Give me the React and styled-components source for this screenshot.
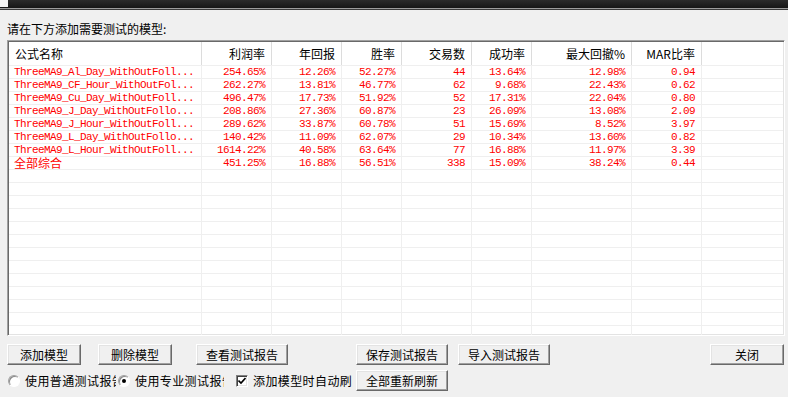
import React from "react";
import styled, { createGlobalStyle } from "styled-components";

const GlobalStyle = createGlobalStyle`
  html, body {
    margin: 0;
    padding: 0;
    background: #f0f0f0;
  }
  body {
    font-family: "Noto Sans CJK SC", "Liberation Sans", sans-serif;
    font-size: 12px;
    color: #000;
  }
`;

const Window = styled.div`
  width: 788px;
  height: 397px;
  overflow: hidden;
  display: flex;
  flex-direction: column;
  background: #f0f0f0;
`;

const TitleBar = styled.div`
  height: 10px;
  flex-shrink: 0;
  display: flex;
  align-items: flex-start;
  background: linear-gradient(
    to bottom,
    #2b2b2b 0,
    #161616 8px,
    #9c9c9c 8px,
    #9c9c9c 9px,
    #3a3a3a 9px
  );
`;

const WinIcon = styled.div`
  width: 8px;
  height: 7px;
  background: #f4f4f4;
`;

const Body = styled.div`
  padding: 0 3px 0 7px;
  display: flex;
  flex-direction: column;
`;

const Prompt = styled.div`
  height: 30px;
  box-sizing: border-box;
  padding-top: 11px;
  line-height: 16px;
  font-size: 12px;
  white-space: nowrap;
`;

const ListBox = styled.div`
  height: 296px;
  box-sizing: border-box;
  border-top: 1px solid #a0a0a0;
  border-left: 1px solid #a0a0a0;
  border-bottom: 1px solid #ffffff;
  border-right: 1px solid #ffffff;
  box-shadow: inset 1px 1px 0 #696969, inset -1px -1px 0 #e3e3e3;
  padding: 1px;
  background: #fff;
  overflow: hidden;
  display: flex;
  flex-direction: column;
`;

const cols = "193px 70px 70px 60px 70px 60px 100px 70px 1fr";

const HeaderRow = styled.div`
  display: grid;
  grid-template-columns: ${cols};
  height: 23px;
  flex-shrink: 0;
  background: #fff;
`;

const HeadCell = styled.div`
  border-right: ${(p) => (p.$last ? "none" : "1px solid #dcdcdc")};
  padding: ${(p) => (p.$left ? "0 0 0 6px" : "0 6px 0 0")};
  text-align: ${(p) => (p.$left ? "left" : "right")};
  line-height: 23px;
  font-size: 12px;
  white-space: nowrap;
  overflow: hidden;
`;

const Row = styled.div`
  display: grid;
  grid-template-columns: ${cols};
  height: 13px;
  flex-shrink: 0;
  box-sizing: border-box;
  border-top: 1px solid #efefef;
`;

const Cell = styled.div`
  border-right: ${(p) => (p.$last ? "none" : "1px solid #efefef")};
  padding: ${(p) => (p.$left ? "0 0 0 5px" : "0 6px 0 0")};
  text-align: ${(p) => (p.$left ? "left" : "right")};
  color: #ff0000;
  font-family: ${(p) =>
    p.$cjk
      ? '"Noto Sans CJK SC", sans-serif'
      : '"Liberation Mono", "DejaVu Sans Mono", monospace'};
  font-size: ${(p) => (p.$cjk ? "12px" : "11px")};
  letter-spacing: ${(p) => (p.$cjk ? "0" : "-0.6px")};
  line-height: 12px;
  white-space: nowrap;
  overflow: hidden;
`;

const ButtonRow = styled.div`
  display: flex;
  align-items: center;
  height: 21px;
  margin-top: ${(p) => p.$mt}px;
`;

const Button = styled.div`
  width: ${(p) => p.$w}px;
  height: 21px;
  margin-left: ${(p) => p.$ml || 0}px;
  flex-shrink: 0;
  box-sizing: border-box;
  border-top: 1px solid #ffffff;
  border-left: 1px solid #ffffff;
  border-bottom: 1px solid #696969;
  border-right: 1px solid #696969;
  box-shadow: inset -1px -1px 0 #a0a0a0, inset 1px 1px 0 #e3e3e3;
  background: #f0f0f0;
  display: flex;
  align-items: center;
  justify-content: center;
  font-size: 12px;
  white-space: nowrap;
`;

const Option = styled.div`
  width: ${(p) => p.$w}px;
  margin-left: ${(p) => p.$ml || 0}px;
  flex-shrink: 0;
  display: flex;
  align-items: center;
  overflow: hidden;
  white-space: nowrap;
  font-size: 12px;
  letter-spacing: 0.4px;
`;

const RadioMark = styled.span`
  width: 12px;
  height: 12px;
  flex-shrink: 0;
  margin-right: 5px;
  box-sizing: border-box;
  border-radius: 50%;
  border: 1px solid;
  border-color: #a0a0a0 #ffffff #ffffff #a0a0a0;
  box-shadow: inset 1px 1px 0 #8a8a8a;
  background: #fff;
  display: flex;
  align-items: center;
  justify-content: center;

  &::after {
    content: "";
    width: 4px;
    height: 4px;
    border-radius: 50%;
    background: ${(p) => (p.$checked ? "#000" : "transparent")};
  }
`;

const CheckMark = styled.span`
  width: 12px;
  height: 12px;
  flex-shrink: 0;
  margin-right: 5px;
  box-sizing: border-box;
  border: 1px solid;
  border-color: #808080 #ffffff #ffffff #808080;
  box-shadow: inset 1px 1px 0 #404040, inset -1px -1px 0 #e3e3e3;
  background: #fff;
  display: flex;
  align-items: center;
  justify-content: center;
`;

const rows = [
  ["ThreeMA9_Al_Day_WithOutFoll...", "254.65%", "12.26%", "52.27%", "44", "13.64%", "12.98%", "0.94"],
  ["ThreeMA9_CF_Hour_WithOutFol...", "262.27%", "13.81%", "46.77%", "62", "9.68%", "22.43%", "0.62"],
  ["ThreeMA9_Cu_Day_WithOutFoll...", "496.47%", "17.73%", "51.92%", "52", "17.31%", "22.04%", "0.80"],
  ["ThreeMA9_J_Day_WithOutFollo...", "208.86%", "27.36%", "60.87%", "23", "26.09%", "13.08%", "2.09"],
  ["ThreeMA9_J_Hour_WithOutFoll...", "289.62%", "33.87%", "60.78%", "51", "15.69%", "8.52%", "3.97"],
  ["ThreeMA9_L_Day_WithOutFollo...", "140.42%", "11.09%", "62.07%", "29", "10.34%", "13.60%", "0.82"],
  ["ThreeMA9_L_Hour_WithOutFoll...", "1614.22%", "40.58%", "63.64%", "77", "16.88%", "11.97%", "3.39"],
  ["全部综合", "451.25%", "16.88%", "56.51%", "338", "15.09%", "38.24%", "0.44"],
];

const headers = ["公式名称", "利润率", "年回报", "胜率", "交易数", "成功率", "最大回撤%", "MAR比率"];

const TOTAL_ROWS = 21;

export default function App() {
  const filler = Array.from({ length: TOTAL_ROWS - rows.length });

  return (
    <>
      <GlobalStyle />
      <Window>
        <TitleBar>
          <WinIcon />
        </TitleBar>
        <Body>
          <Prompt>请在下方添加需要测试的模型:</Prompt>
          <ListBox>
            <HeaderRow>
              {headers.map((h, i) => (
                <HeadCell key={h} $left={i === 0}>{h}</HeadCell>
              ))}
              <HeadCell $last />
            </HeaderRow>
            {rows.map((r) => (
              <Row key={r[0]}>
                {r.map((v, i) => (
                  <Cell key={i} $left={i === 0} $cjk={i === 0 && v === "全部综合"}>
                    {v}
                  </Cell>
                ))}
                <Cell $last />
              </Row>
            ))}
            {filler.map((_, k) => (
              <Row key={"e" + k}>
                {headers.map((h) => (
                  <Cell key={h} />
                ))}
                <Cell $last />
              </Row>
            ))}
          </ListBox>

          <ButtonRow $mt={8}>
            <Button $w={74}>添加模型</Button>
            <Button $w={74} $ml={17}>删除模型</Button>
            <Button $w={92} $ml={24}>查看测试报告</Button>
            <Button $w={92} $ml={68}>保存测试报告</Button>
            <Button $w={92} $ml={10}>导入测试报告</Button>
            <Button $w={74} $ml={160}>关闭</Button>
          </ButtonRow>

          <ButtonRow $mt={5}>
            <Option $w={108} $ml={1}>
              <RadioMark />
              使用普通测试报告
            </Option>
            <Option $w={106} $ml={2}>
              <RadioMark $checked />
              使用专业测试报告
            </Option>
            <Option $w={116} $ml={12}>
              <CheckMark>
                <svg width="8" height="8" viewBox="0 0 8 8">
                  <path d="M0.5 3.5 L3 6 L7.5 1" fill="none" stroke="#000" strokeWidth="1.6" />
                </svg>
              </CheckMark>
              添加模型时自动刷新
            </Option>
            <Button $w={92} $ml={4}>全部重新刷新</Button>
          </ButtonRow>
        </Body>
      </Window>
    </>
  );
}
